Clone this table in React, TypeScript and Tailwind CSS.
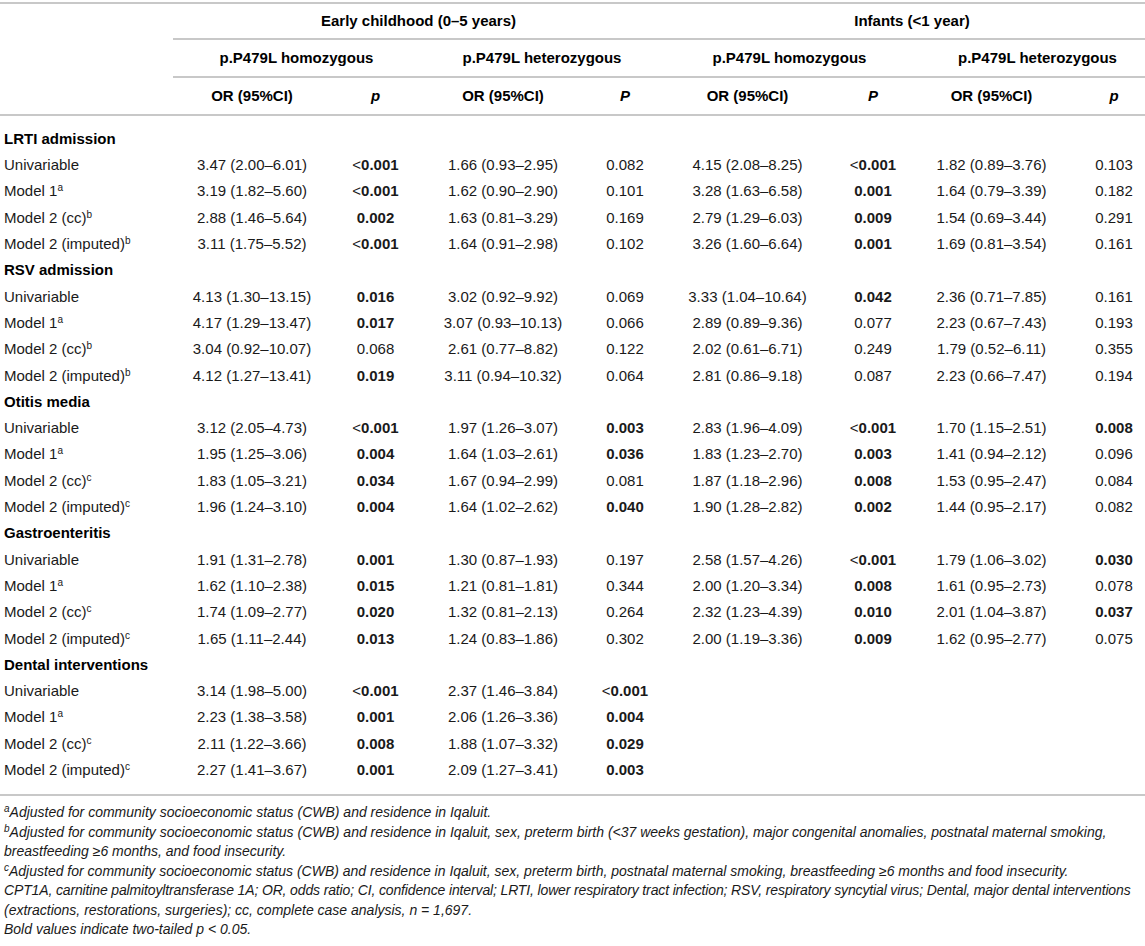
type Row = [string, string, ...string[]];
type Section = { title: string; rows: Row[] };

const sections: Section[] = [
  {
    title: "LRTI admission",
    rows: [
      ["Univariable", "", "3.47 (2.00–6.01)", "*<0.001", "1.66 (0.93–2.95)", "0.082", "4.15 (2.08–8.25)", "*<0.001", "1.82 (0.89–3.76)", "0.103"],
      ["Model 1", "a", "3.19 (1.82–5.60)", "*<0.001", "1.62 (0.90–2.90)", "0.101", "3.28 (1.63–6.58)", "*0.001", "1.64 (0.79–3.39)", "0.182"],
      ["Model 2 (cc)", "b", "2.88 (1.46–5.64)", "*0.002", "1.63 (0.81–3.29)", "0.169", "2.79 (1.29–6.03)", "*0.009", "1.54 (0.69–3.44)", "0.291"],
      ["Model 2 (imputed)", "b", "3.11 (1.75–5.52)", "*<0.001", "1.64 (0.91–2.98)", "0.102", "3.26 (1.60–6.64)", "*0.001", "1.69 (0.81–3.54)", "0.161"],
    ],
  },
  {
    title: "RSV admission",
    rows: [
      ["Univariable", "", "4.13 (1.30–13.15)", "*0.016", "3.02 (0.92–9.92)", "0.069", "3.33 (1.04–10.64)", "*0.042", "2.36 (0.71–7.85)", "0.161"],
      ["Model 1", "a", "4.17 (1.29–13.47)", "*0.017", "3.07 (0.93–10.13)", "0.066", "2.89 (0.89–9.36)", "0.077", "2.23 (0.67–7.43)", "0.193"],
      ["Model 2 (cc)", "b", "3.04 (0.92–10.07)", "0.068", "2.61 (0.77–8.82)", "0.122", "2.02 (0.61–6.71)", "0.249", "1.79 (0.52–6.11)", "0.355"],
      ["Model 2 (imputed)", "b", "4.12 (1.27–13.41)", "*0.019", "3.11 (0.94–10.32)", "0.064", "2.81 (0.86–9.18)", "0.087", "2.23 (0.66–7.47)", "0.194"],
    ],
  },
  {
    title: "Otitis media",
    rows: [
      ["Univariable", "", "3.12 (2.05–4.73)", "*<0.001", "1.97 (1.26–3.07)", "*0.003", "2.83 (1.96–4.09)", "*<0.001", "1.70 (1.15–2.51)", "*0.008"],
      ["Model 1", "a", "1.95 (1.25–3.06)", "*0.004", "1.64 (1.03–2.61)", "*0.036", "1.83 (1.23–2.70)", "*0.003", "1.41 (0.94–2.12)", "0.096"],
      ["Model 2 (cc)", "c", "1.83 (1.05–3.21)", "*0.034", "1.67 (0.94–2.99)", "0.081", "1.87 (1.18–2.96)", "*0.008", "1.53 (0.95–2.47)", "0.084"],
      ["Model 2 (imputed)", "c", "1.96 (1.24–3.10)", "*0.004", "1.64 (1.02–2.62)", "*0.040", "1.90 (1.28–2.82)", "*0.002", "1.44 (0.95–2.17)", "0.082"],
    ],
  },
  {
    title: "Gastroenteritis",
    rows: [
      ["Univariable", "", "1.91 (1.31–2.78)", "*0.001", "1.30 (0.87–1.93)", "0.197", "2.58 (1.57–4.26)", "*<0.001", "1.79 (1.06–3.02)", "*0.030"],
      ["Model 1", "a", "1.62 (1.10–2.38)", "*0.015", "1.21 (0.81–1.81)", "0.344", "2.00 (1.20–3.34)", "*0.008", "1.61 (0.95–2.73)", "0.078"],
      ["Model 2 (cc)", "c", "1.74 (1.09–2.77)", "*0.020", "1.32 (0.81–2.13)", "0.264", "2.32 (1.23–4.39)", "*0.010", "2.01 (1.04–3.87)", "*0.037"],
      ["Model 2 (imputed)", "c", "1.65 (1.11–2.44)", "*0.013", "1.24 (0.83–1.86)", "0.302", "2.00 (1.19–3.36)", "*0.009", "1.62 (0.95–2.77)", "0.075"],
    ],
  },
  {
    title: "Dental interventions",
    rows: [
      ["Univariable", "", "3.14 (1.98–5.00)", "*<0.001", "2.37 (1.46–3.84)", "*<0.001", "", "", "", ""],
      ["Model 1", "a", "2.23 (1.38–3.58)", "*0.001", "2.06 (1.26–3.36)", "*0.004", "", "", "", ""],
      ["Model 2 (cc)", "c", "2.11 (1.22–3.66)", "*0.008", "1.88 (1.07–3.32)", "*0.029", "", "", "", ""],
      ["Model 2 (imputed)", "c", "2.27 (1.41–3.67)", "*0.001", "2.09 (1.27–3.41)", "*0.003", "", "", "", ""],
    ],
  },
];

const cols = "grid grid-cols-[173px_158px_89px_166px_78px_167px_84px_153px_77px]";
const line = "border-[#c8c8c8]";

function Value({ v }: { v: string }) {
  if (!v.startsWith("*")) return <>{v}</>;
  const t = v.slice(1);
  if (t.startsWith("<"))
    return (
      <span className="font-bold">
        <span className="font-normal">&lt;</span>
        {t.slice(1)}
      </span>
    );
  return <span className="font-bold">{t}</span>;
}

export default function App() {
  const subHeads = ["OR (95%CI)", "p", "OR (95%CI)", "P", "OR (95%CI)", "P", "OR (95%CI)", "p"];
  return (
    <div className="w-[1145px] overflow-hidden bg-white pt-[2px] font-['Liberation_Sans',Arial,sans-serif] text-[15px] text-[#1a1a1a]">
      <div className={`border-t-2 ${line}`}>
        {/* group headers */}
        <div className="grid h-[36px] grid-cols-[173px_491px_481px] font-bold text-black">
          <div />
          <div className={`flex items-center justify-center border-b-2 ${line}`}>Early childhood (0–5 years)</div>
          <div className={`flex items-center justify-center border-b-2 pl-[15px] ${line}`}>Infants (&lt;1 year)</div>
        </div>
        <div className="grid h-[38px] grid-cols-[173px_247px_244px_251px_230px] font-bold text-black">
          <div />
          <div className={`flex items-center justify-center border-b-2 ${line}`}>p.P479L homozygous</div>
          <div className={`flex items-center justify-center border-b-2 ${line}`}>p.P479L heterozygous</div>
          <div className={`flex items-center justify-center border-b-2 ${line}`}>p.P479L homozygous</div>
          <div className={`flex items-center justify-center border-b-2 pl-[15px] ${line}`}>p.P479L heterozygous</div>
        </div>
        <div className={`${cols} h-[38px] items-center border-b-2 font-bold text-black ${line}`}>
          <div />
          {subHeads.map((h, i) => (
            <div key={i} className={`text-center ${i % 2 ? "italic" : ""} ${i === 7 ? "pl-[15px]" : ""}`}>
              {h}
            </div>
          ))}
        </div>
      </div>

      <div className={`border-b-2 pt-[10px] pb-[11px] ${line}`}>
        {sections.map((s) => (
          <div key={s.title}>
            <div className="flex h-[26.3px] items-center pl-[4px] font-bold text-black">{s.title}</div>
            {s.rows.map(([label, sup, ...vals]) => (
              <div key={label} className={`${cols} h-[26.3px] items-center`}>
                <div className="pl-[4px] whitespace-nowrap">
                  {label}
                  {sup && <sup className="text-[10px]">{sup}</sup>}
                </div>
                {vals.map((v, i) => (
                  <div key={i} className={`text-center whitespace-nowrap ${i === 7 ? "pl-[15px]" : ""}`}>
                    <Value v={v} />
                  </div>
                ))}
              </div>
            ))}
          </div>
        ))}
      </div>

      <div className="pt-[7px] pl-[4px] text-[14px] leading-[19.5px] italic whitespace-nowrap">
        <div>
          <sup className="text-[10px]">a</sup>Adjusted for community socioeconomic status (CWB) and residence in Iqaluit.
        </div>
        <div>
          <sup className="text-[10px]">b</sup>Adjusted for community socioeconomic status (CWB) and residence in Iqaluit, sex, preterm birth (&lt;37 weeks gestation), major congenital anomalies, postnatal maternal smoking,
        </div>
        <div>breastfeeding ≥6 months, and food insecurity.</div>
        <div>
          <sup className="text-[10px]">c</sup>Adjusted for community socioeconomic status (CWB) and residence in Iqaluit, sex, preterm birth, postnatal maternal smoking, breastfeeding ≥6 months and food insecurity.
        </div>
        <div className="tracking-[-0.14px]">
          CPT1A, carnitine palmitoyltransferase 1A; OR, odds ratio; CI, confidence interval; LRTI, lower respiratory tract infection; RSV, respiratory syncytial virus; Dental, major dental interventions
        </div>
        <div>(extractions, restorations, surgeries); cc, complete case analysis, n = 1,697.</div>
        <div>Bold values indicate two-tailed p &lt; 0.05.</div>
      </div>
    </div>
  );
}
